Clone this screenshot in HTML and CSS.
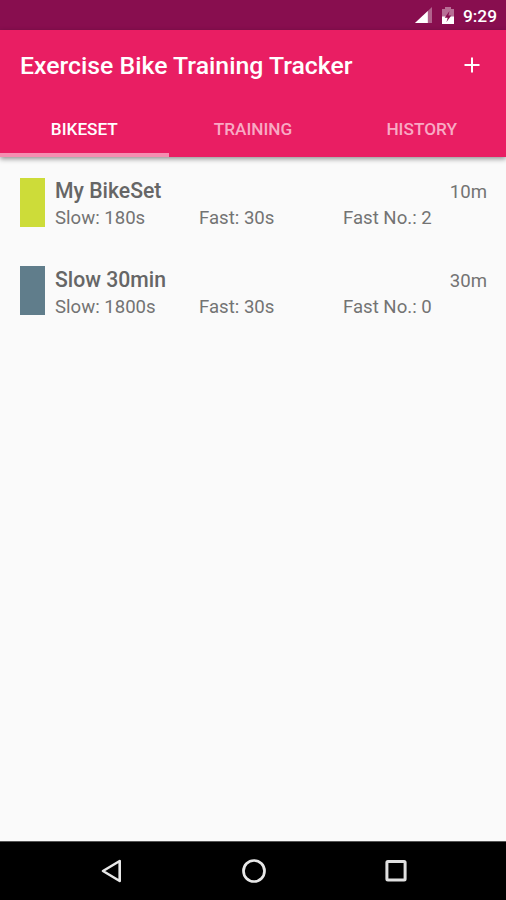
FILE: index.html
```html
<!DOCTYPE html>
<html lang="en">
<head>
<meta charset="utf-8">
<title>Exercise Bike Training Tracker</title>
<link rel="stylesheet" href="styles.css">
</head>
<body>
<div class="status">
  <svg class="signal" width="18" height="17" viewBox="0 0 18 17"><path d="M17 0V16H0z" fill="#fff" opacity=".35"/><path d="M12.8 3.9V16H0z" fill="#fff"/></svg>
  <svg class="battery" width="12" height="18" viewBox="0 0 12 18"><path d="M0 2h3V0h6v2h3v8H0z" fill="#fff" opacity=".4"/><path d="M0 9.5h12V17H0z" fill="#fff"/><path d="M7.5 4 2.7 10.7h3L4.5 15l4.8-6.6H6.4z" fill="#880e4f"/></svg>
  <span class="clock">9:29</span>
</div>
<header class="header">
  <div class="bar">
    <h1 class="title">Exercise Bike Training Tracker</h1>
    <svg class="add" width="16" height="16" viewBox="0 0 16 16"><path d="M8 .5v15M.5 8h15" stroke="#fff" stroke-width="2"/></svg>
  </div>
  <nav class="tabs">
    <span class="tab active">BIKESET</span>
    <span class="tab">TRAINING</span>
    <span class="tab">HISTORY</span>
  </nav>
</header>
<main class="list">
  <section class="row">
    <div class="swatch lime"></div>
    <div class="body">
      <div class="top"><span class="name">My BikeSet</span><span class="total">10m</span></div>
      <div class="details"><span>Slow: 180s</span><span>Fast: 30s</span><span>Fast No.: 2</span></div>
    </div>
  </section>
  <section class="row">
    <div class="swatch slate"></div>
    <div class="body">
      <div class="top"><span class="name">Slow 30min</span><span class="total">30m</span></div>
      <div class="details"><span>Slow: 1800s</span><span>Fast: 30s</span><span>Fast No.: 0</span></div>
    </div>
  </section>
</main>
<footer class="nav">
  <svg width="24" height="26" viewBox="0 0 24 26"><path d="M20.7 3v20L4 13z" fill="none" stroke="#e8e8e8" stroke-width="2.6" stroke-linejoin="round"/></svg>
  <svg width="26" height="26" viewBox="0 0 26 26"><circle cx="13" cy="13" r="10.5" fill="none" stroke="#e8e8e8" stroke-width="2.7"/></svg>
  <svg width="24" height="26" viewBox="0 0 24 26"><rect x="2.9" y="3.6" width="18.2" height="18.4" rx="1" fill="none" stroke="#e0e0e0" stroke-width="3"/></svg>
</footer>
</body>
</html>
```
FILE: styles.css
```css
* { box-sizing: border-box; }
body {
  margin: 0;
  height: 900px;
  display: flex;
  flex-direction: column;
  overflow: hidden;
  background: #fafafa;
  color: #737373;
  font-family: Roboto, "Liberation Sans", sans-serif;
}
.status {
  height: 30px;
  flex: none;
  display: flex;
  align-items: center;
  justify-content: flex-end;
  padding: 1px 9px 0 0;
  background: #880e4f;
}
.battery { margin-left: 9px; }
.clock {
  margin-left: 9px;
  color: #fff;
  font-size: 17.3px;
  font-weight: 500;
}
.header {
  position: relative;
  height: 127px;
  flex: none;
  background: #e91e63;
  box-shadow: 0 2px 5px rgba(0, 0, 0, .42);
  color: #fff;
}
.bar {
  height: 69px;
  display: flex;
  align-items: center;
  justify-content: space-between;
  padding: 2px 26px 0 20px;
}
.add { margin-bottom: 2px; }
.title {
  margin: 0;
  font-size: 24.8px;
  font-weight: 500;
  white-space: nowrap;
}
.tabs {
  height: 58px;
  display: grid;
  grid-template-columns: repeat(3, 1fr);
}
.tab {
  display: flex;
  align-items: center;
  justify-content: center;
  padding-top: 5px;
  border-bottom: 4px solid transparent;
  font-size: 17.2px;
  font-weight: 500;
  color: #f8aac4;
}
.tab.active {
  color: #fff;
  border-color: #f48fb1;
}
.list { flex: 1; padding-top: 21px; }
.row {
  display: flex;
  height: 49px;
  margin: 0 19px 39px 20px;
}
.swatch { width: 25px; height: 49px; flex: none; }
.lime { background: #cddc39; }
.slate { background: #607d8b; }
.body { flex: 1; margin-left: 10px; }
.row + .row .body { padding-top: 1px; }
.top {
  display: flex;
  align-items: baseline;
  justify-content: space-between;
  height: 27px;
  line-height: 25px;
}
.name { font-size: 21.2px; font-weight: 500; color: #666; }
.total { font-size: 18.6px; }
.details {
  display: grid;
  grid-template-columns: repeat(3, 1fr);
  font-size: 18.6px;
  line-height: 26px;
  white-space: nowrap;
}
.nav {
  height: 59px;
  flex: none;
  display: flex;
  align-items: center;
  justify-content: space-between;
  padding: 0 98px 0 99px;
  border-top: 1px solid #555;
  background: #000;
}
```
